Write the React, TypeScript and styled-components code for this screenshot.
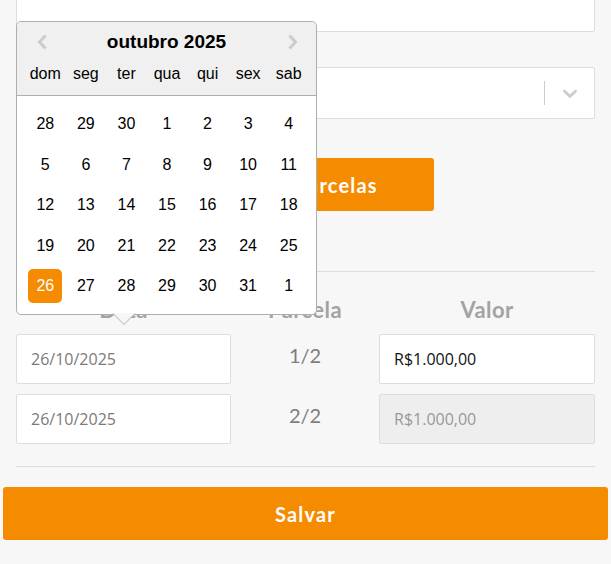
import React from 'react';
import styled, { createGlobalStyle } from 'styled-components';

const GlobalStyle = createGlobalStyle`
  html, body {
    margin: 0;
    padding: 0;
    background: #f7f7f7;
    overflow: hidden;
  }
`;

const ORANGE = '#f48b00';

const Page = styled.div`
  padding: 0 3px;
  margin-top: -18px;
  font-family: 'Lato', 'Open Sans', sans-serif;
`;

const Form = styled.div`
  padding: 0 13px;
  display: flex;
  flex-direction: column;
`;

const TextBox = styled.div`
  height: 50px;
  box-sizing: border-box;
  background: #fff;
  border: 1px solid #ddd;
  border-radius: 2px;
`;

const Label = styled.div`
  height: 35px;
`;

const SelectBox = styled.div`
  height: 52px;
  box-sizing: border-box;
  background: #fff;
  border: 1px solid #ddd;
  border-radius: 2px;
  display: flex;
  align-items: center;
  justify-content: flex-end;
`;

const Separator = styled.span`
  width: 1px;
  height: 24px;
  background: #ccc;
`;

const Indicator = styled.span`
  display: flex;
  padding: 0 12px 0 13px;
  color: #ccc;
`;

const ActionButton = styled.button<{ full?: boolean }>`
  height: 53px;
  border: none;
  border-radius: 3px;
  background: ${ORANGE};
  color: #fff;
  font-family: 'Lato', 'Open Sans', sans-serif;
  font-weight: 700;
  font-size: 20px;
  letter-spacing: 1.2px;
  width: ${({ full }) => (full ? '100%' : '257px')};
  align-self: center;
  display: block;
`;

const Divider = styled.hr`
  border: none;
  border-top: 1px solid #ddd;
  margin: 0;
`;

const Grid = styled.div`
  display: grid;
  grid-template-columns: 215px 1fr 216px;
  row-gap: 10px;
  align-items: center;
`;

const HeadCell = styled.div`
  text-align: center;
  font-weight: 700;
  font-size: 22px;
  letter-spacing: 0.4px;
  line-height: 24px;
  color: #a3a3a3;
  margin-bottom: 2px;
`;

const Field = styled.div<{ disabled?: boolean; dark?: boolean }>`
  position: relative;
  height: 50px;
  box-sizing: border-box;
  border: 1px solid #ddd;
  border-radius: 2px;
  background: ${({ disabled }) => (disabled ? '#eee' : '#fff')};
  color: ${({ dark, disabled }) => (disabled ? '#999' : dark ? '#111' : '#7a7a7a')};
  font-family: 'Open Sans', sans-serif;
  font-size: 16px;
  display: flex;
  align-items: center;
  padding-left: 14px;
`;

const Installment = styled.div`
  text-align: center;
  font-size: 20px;
  color: #7d7d7d;
  padding-bottom: 8px;
`;

/* calendar popup */

const Popup = styled.div`
  position: absolute;
  left: -1px;
  bottom: calc(100% + 20px);
  width: 301px;
  box-sizing: border-box;
  background: #fff;
  border: 1px solid #aeaeae;
  border-radius: 5px;
  font-family: 'Liberation Sans', Arial, sans-serif;
  color: #000;
  z-index: 2;
`;

const Triangle = styled.svg`
  position: absolute;
  left: 95px;
  top: 100%;
  margin-top: -1px;
`;

const CalHeader = styled.div`
  position: relative;
  background: #f0f0f0;
  border-bottom: 1px solid #aeaeae;
  border-radius: 5px 5px 0 0;
  padding: 8px 0 9px;
`;

const Title = styled.div`
  text-align: center;
  font-weight: 700;
  font-size: 19px;
  line-height: 24px;
  margin-bottom: 8px;
`;

const NavArrow = styled.span<{ side: 'left' | 'right' }>`
  position: absolute;
  top: 12px;
  ${({ side }) => (side === 'left' ? 'left: 20px;' : 'right: 18px;')}
  display: flex;
`;

const Week = styled.div`
  display: grid;
  grid-template-columns: repeat(7, 1fr);
  padding: 0 7px 0 8px;
  justify-items: center;
  align-items: center;
  font-size: 16px;
  line-height: 24px;
`;

const Days = styled(Week)`
  grid-auto-rows: 34px;
  row-gap: 6.5px;
  padding-top: 11px;
  padding-bottom: 11px;
`;

const Day = styled.span<{ selected?: boolean }>`
  width: 34px;
  height: 34px;
  display: flex;
  align-items: center;
  justify-content: center;
  border-radius: 5px;
  background: ${({ selected }) => (selected ? ORANGE : 'transparent')};
  color: ${({ selected }) => (selected ? '#fff' : '#000')};
`;

const weekDays = ['dom', 'seg', 'ter', 'qua', 'qui', 'sex', 'sab'];
const days = [
  28, 29, 30, 1, 2, 3, 4,
  5, 6, 7, 8, 9, 10, 11,
  12, 13, 14, 15, 16, 17, 18,
  19, 20, 21, 22, 23, 24, 25,
  26, 27, 28, 29, 30, 31, 1,
];

const Chevron = ({ dir }: { dir: 'left' | 'right' }) => (
  <svg width="11" height="16" viewBox="0 0 11 16">
    <path
      d={dir === 'left' ? 'M8.5 1.5 L2.5 8 L8.5 14.5' : 'M2.5 1.5 L8.5 8 L2.5 14.5'}
      fill="none"
      stroke="#ccc"
      strokeWidth="3"
    />
  </svg>
);

const Calendar = () => (
  <Popup>
    <CalHeader>
      <NavArrow side="left"><Chevron dir="left" /></NavArrow>
      <NavArrow side="right"><Chevron dir="right" /></NavArrow>
      <Title>outubro 2025</Title>
      <Week>
        {weekDays.map(d => <span key={d}>{d}</span>)}
      </Week>
    </CalHeader>
    <Days>
      {days.map((d, i) => (
        <Day key={i} selected={i === 28}>{d}</Day>
      ))}
    </Days>
    <Triangle width="24" height="13" viewBox="0 0 24 13">
      <path d="M1 0.5 L12 11.5 L23 0.5" fill="#f7f7f7" stroke="#aeaeae" strokeWidth="1" />
      <path d="M2 0 L22 0" stroke="#f7f7f7" strokeWidth="1.4" />
    </Triangle>
  </Popup>
);

const App = () => {
  return (
    <Page>
      <GlobalStyle />
      <Form>
        <TextBox />
        <Label />
        <SelectBox>
          <Separator />
          <Indicator>
            <svg width="24" height="24" viewBox="0 0 20 20" fill="currentColor">
              <path d="M4.516 7.548c0.436-0.446 1.043-0.481 1.576 0l3.908 3.747 3.908-3.747c0.533-0.481 1.141-0.446 1.574 0 0.436 0.445 0.408 1.197 0 1.615-0.406 0.418-4.695 4.502-4.695 4.502-0.217 0.223-0.502 0.335-0.787 0.335s-0.57-0.112-0.789-0.335c0 0-4.287-4.084-4.695-4.502s-0.436-1.17 0-1.615z" />
            </svg>
          </Indicator>
        </SelectBox>
        <div style={{ height: 39 }} />
        <ActionButton>Gerar Parcelas</ActionButton>
        <div style={{ height: 60 }} />
        <Divider />
        <div style={{ height: 26 }} />
        <Grid>
          <HeadCell>Data</HeadCell>
          <HeadCell>Parcela</HeadCell>
          <HeadCell>Valor</HeadCell>

          <Field>
            26/10/2025
            <Calendar />
          </Field>
          <Installment>1/2</Installment>
          <Field dark>R$1.000,00</Field>

          <Field>26/10/2025</Field>
          <Installment>2/2</Installment>
          <Field disabled>R$1.000,00</Field>
        </Grid>
        <div style={{ height: 22 }} />
        <Divider />
        <div style={{ height: 20 }} />
      </Form>
      <ActionButton full>Salvar</ActionButton>
    </Page>
  );
};

export default App;
